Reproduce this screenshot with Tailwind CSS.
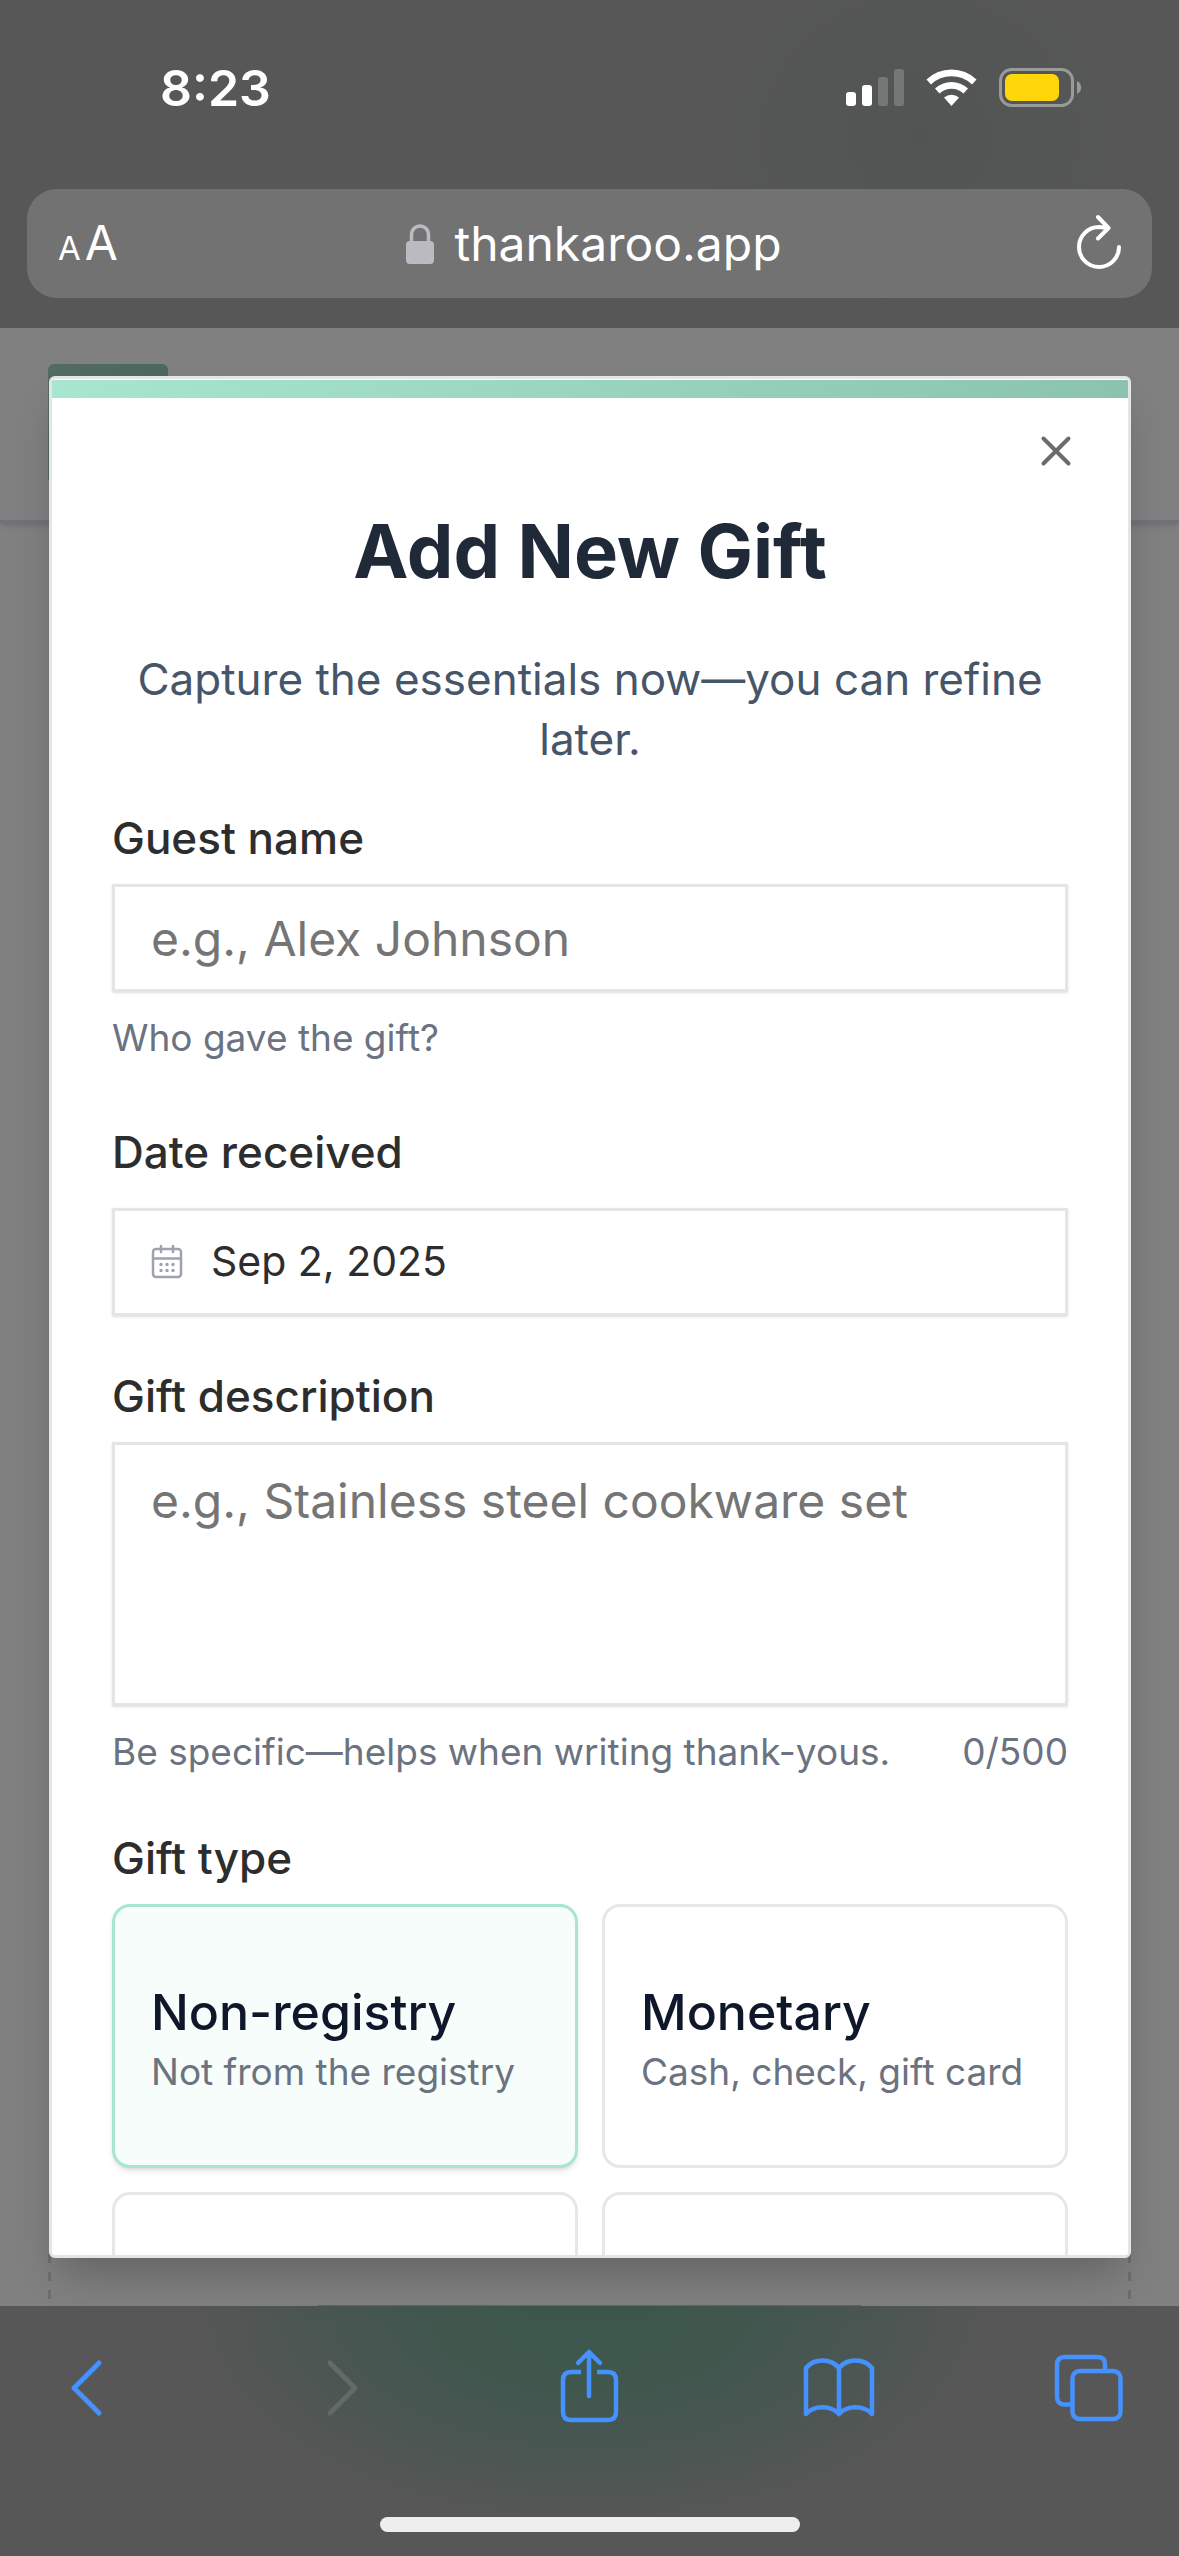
<!DOCTYPE html>
<html lang="en">
<head>
<meta charset="utf-8">
<meta name="viewport" content="width=device-width, initial-scale=1">
<title>Add New Gift</title>
<script src="https://cdn.jsdelivr.net/npm/@tailwindcss/browser@4"></script>
</head>
<body class="flex h-screen flex-col overflow-hidden bg-[#575757] font-['Inter',sans-serif]">

  <!-- Status bar and address bar -->
  <header class="shrink-0 bg-[#575757] bg-[radial-gradient(ellipse_220px_200px_at_78%_42%,#505553_0%,#575757_100%)] pb-[30px] text-white">
    <div class="flex items-center justify-between pt-[58px] pr-[97px] pl-40">
      <time class="text-[50px] leading-[60px] font-semibold">8:23</time>
      <svg class="h-[40px] w-[236px]" viewBox="846 68 236 40" fill="none" aria-label="Signal, Wi-Fi and battery">
        <rect x="846" y="92" width="10" height="14" rx="3" fill="#fff"/>
        <rect x="862" y="85" width="10" height="21" rx="3" fill="#fff"/>
        <rect x="878" y="77" width="10" height="29" rx="3" fill="#757776"/>
        <rect x="894" y="69" width="10" height="37" rx="3" fill="#757776"/>
        <path d="M926.500 79.500 A36 36 0 0 1 976.500 79.500 L972 84.500 A29.500 29.500 0 0 0 931 84.500 Z" fill="#fff"/>
        <path d="M935 88.500 A24 24 0 0 1 968 88.500 L963.500 93.500 A17.500 17.500 0 0 0 939.500 93.500 Z" fill="#fff"/>
        <path d="M944 97.500 A11.500 11.500 0 0 1 959 97.500 L951.500 106 Z" fill="#fff"/>
        <rect x="1000.500" y="69.500" width="72" height="36" rx="11" stroke="#999b9a" stroke-width="3"/>
        <rect x="1005" y="74" width="54" height="27" rx="7" fill="#ffd60a"/>
        <path d="M1077 81 C1082.500 83.500 1082.500 91.500 1077 94 Z" fill="#999b9a"/>
      </svg>
    </div>
    <div class="mx-[27px] mt-[71px] flex h-[109px] items-center justify-between rounded-[30px] bg-[#727272] pr-[30px] pl-[31px]">
      <button type="button" aria-label="Page settings" class="flex w-[70px] items-baseline gap-1 pt-1 leading-[60px]"><span class="text-[33px]">A</span><span class="text-[48px]">A</span></button>
      <a href="#" class="flex items-center gap-5 text-[48px] leading-[60px]">
        <svg class="h-[40px] w-[28px]" viewBox="0 0 28 40" fill="none" aria-hidden="true">
          <rect x="0" y="17" width="28" height="23" rx="4" fill="#bbbac1"/>
          <path d="M5.500 18 V11 C5.500 -1 22.500 -1 22.500 11 V18" stroke="#bbbac1" stroke-width="3.500"/>
        </svg>
        thankaroo.app
      </a>
      <button type="button" aria-label="Reload" class="flex w-[62px] justify-end">
        <svg class="h-[60px] w-[46px]" viewBox="1075 213 46 60" fill="none" stroke="#fff" stroke-width="4" stroke-linecap="round" stroke-linejoin="round">
          <path d="M1118 246 A20 20 0 1 1 1098 226 L1107 227 M1097 216 L1107.500 227 L1097 237.500"/>
        </svg>
      </button>
    </div>
  </header>

  <main class="relative flex min-h-0 flex-1 flex-col bg-[#808080] py-12 pr-12 pl-[49px]">
    <!-- Dimmed page behind the dialog -->
    <div class="absolute inset-x-0 top-0 h-[195px] border-b-[3px] border-[#6f7277] shadow-md" aria-hidden="true">
      <div class="mt-9 ml-12 h-[120px] w-[120px] rounded-md bg-linear-to-r from-[#526c63] to-[#4c685e]"></div>
    </div>
    <div class="absolute inset-x-12 bottom-0 flex h-[52px] justify-between" aria-hidden="true">
      <div class="w-[3px] bg-[repeating-linear-gradient(#6e6e6e_0px_9px,transparent_9px_18px)]"></div>
      <div class="w-[3px] bg-[repeating-linear-gradient(#6e6e6e_0px_9px,transparent_9px_18px)]"></div>
    </div>
    <div class="absolute inset-x-[27%] bottom-0 h-px bg-[#566d64]" aria-hidden="true"></div>

    <section role="dialog" aria-labelledby="dialog-title" class="relative flex min-h-0 flex-1 flex-col overflow-hidden rounded-md border-[3px] border-[#e5e5e5] bg-white pt-px shadow-[0_24px_40px_-10px_rgba(0,0,0,0.24)]">
      <div class="h-[18px] shrink-0 bg-linear-to-r from-[#a8e6cf] to-[#8bc3ae]"></div>
      <button type="button" aria-label="Close" class="absolute top-[50px] right-[50px] p-1">
        <svg class="size-[36px]" viewBox="0 0 36 36" fill="none" stroke="#6b6b6b" stroke-width="4" stroke-linecap="round"><path d="M5.500 5.500 L30.500 30.500 M30.500 5.500 L5.500 30.500"/></svg>
      </button>

      <form class="flex min-h-0 flex-1 flex-col overflow-hidden px-[60px] pt-[113px] text-[#2d2d2d]">
        <h1 id="dialog-title" class="shrink-0 text-center text-[74px] leading-[80px] font-bold text-[#1f2937]">Add New Gift</h1>
        <p class="mt-[58px] shrink-0 text-center text-[44px] leading-[60px] text-[#475569]">Capture the essentials now—you can refine later.</p>

        <div class="mt-[41px] shrink-0">
          <label for="guest" class="block text-[44px] leading-[56px] font-medium">Guest name</label>
          <input id="guest" type="text" placeholder="e.g., Alex Johnson" class="mt-[18px] block h-[108px] w-full border-[3px] border-[#e5e5e5] px-9 text-[48px] shadow-sm placeholder:text-[#757575]">
          <p class="mt-[22px] text-[37px] leading-[48px] text-[#6b7280]">Who gave the gift?</p>
        </div>

        <div class="mt-[62px] shrink-0">
          <label for="date" class="block text-[44px] leading-[56px] font-medium">Date received</label>
          <button id="date" type="button" class="mt-7 flex h-[108px] w-full items-center gap-7 border-[3px] border-[#e5e5e5] px-9 text-left text-[41px] shadow-sm">
            <svg class="h-[36px] w-[32px]" viewBox="0 0 32 36" fill="none" stroke="#9ca3af" stroke-width="2.500" stroke-linecap="round" aria-hidden="true">
              <rect x="2" y="5" width="28" height="28" rx="3"/>
              <path d="M2 14.500 H30 M10 2 V8 M22 2 V8"/>
              <path d="M10 20.500 h.01 M16 20.500 h.01 M22 20.500 h.01 M10 26.500 h.01 M16 26.500 h.01 M22 26.500 h.01" stroke-width="3.500"/>
            </svg>
            Sep 2, 2025
          </button>
        </div>

        <div class="mt-[52px] shrink-0">
          <label for="description" class="block text-[44px] leading-[56px] font-medium">Gift description</label>
          <textarea id="description" placeholder="e.g., Stainless steel cookware set" class="mt-[18px] block h-[264px] w-full resize-none border-[3px] border-[#e5e5e5] px-9 py-5 text-[48px] leading-[72px] shadow-sm placeholder:text-[#757575]"></textarea>
          <div class="mt-[22px] flex justify-between text-[37px] leading-[48px] text-[#6b7280]">
            <p>Be specific—helps when writing thank-yous.</p>
            <p>0/500</p>
          </div>
        </div>

        <fieldset class="mt-[54px] shrink-0">
          <legend class="text-[44px] leading-[56px] font-medium">Gift type</legend>
          <div class="mt-[18px] grid grid-cols-2 gap-6">
            <label class="flex h-[264px] flex-col justify-center rounded-[18px] border-[3px] border-[#a8e6cf] bg-[#f6fdfa] px-9 shadow-md">
              <input type="radio" name="type" checked class="sr-only">
              <span class="text-[50px] leading-[72px] font-medium text-[#0f172a]">Non-registry</span>
              <span class="text-[37px] leading-[48px] text-[#6b7280]">Not from the registry</span>
            </label>
            <label class="flex h-[264px] flex-col justify-center rounded-[18px] border-[3px] border-[#e5e7eb] px-9">
              <input type="radio" name="type" class="sr-only">
              <span class="text-[50px] leading-[72px] font-medium text-[#0f172a]">Monetary</span>
              <span class="text-[37px] leading-[48px] whitespace-nowrap text-[#6b7280]">Cash, check, gift card</span>
            </label>
            <div class="h-[264px] rounded-[18px] border-[3px] border-[#e5e7eb]"></div>
            <div class="h-[264px] rounded-[18px] border-[3px] border-[#e5e7eb]"></div>
          </div>
        </fieldset>
      </form>
    </section>
  </main>

  <!-- Browser toolbar -->
  <footer class="flex h-[250px] shrink-0 flex-col items-center justify-between bg-[#575757] bg-[radial-gradient(ellipse_400px_220px_at_50%_0%,#3d574c_0%,#40574e_40%,#4b5652_70%,#575757_100%)] pt-[34px] pb-6">
    <nav class="flex w-full justify-between pr-[42px] pl-[38px] text-[#4592ff]" aria-label="Browser">
      <button type="button" aria-label="Back"><svg class="size-24" viewBox="0 0 96 96" fill="none" stroke="currentColor" stroke-width="5" stroke-linecap="round" stroke-linejoin="round"><path d="M61 23 L36 48 L61 73"/></svg></button>
      <button type="button" aria-label="Forward" disabled class="text-[#646a68]"><svg class="size-24" viewBox="0 0 96 96" fill="none" stroke="currentColor" stroke-width="5" stroke-linecap="round" stroke-linejoin="round"><path d="M41 23 L66 48 L41 73"/></svg></button>
      <button type="button" aria-label="Share"><svg class="size-24" viewBox="0 0 96 96" fill="none" stroke="currentColor" stroke-width="4.500"><path d="M41 32 H31 Q23 32 23 40 V72 Q23 80 31 80 H68 Q76 80 76 72 V40 Q76 32 68 32 H57"/><path d="M49 56 V12 M38 23 L49 12 L60 23" stroke-linecap="round" stroke-linejoin="round"/></svg></button>
      <button type="button" aria-label="Bookmarks"><svg class="size-24" viewBox="0 0 96 96" fill="none" stroke="currentColor" stroke-width="4.500" stroke-linejoin="round"><path d="M49 28 C41 18 24 18 16 28 V74 C24 65 41 65 49 74 C57 65 74 65 82 74 V28 C74 18 57 18 49 28 V74"/></svg></button>
      <button type="button" aria-label="Tabs"><svg class="size-24" viewBox="0 0 96 96" fill="none" stroke="currentColor" stroke-width="4.500"><path d="M64 31 V24 Q64 17 56 17 H24 Q16 17 16 25 V57 Q16 64.500 24 64.500 H31"/><rect x="31.500" y="31" width="48" height="48" rx="7"/></svg></button>
    </nav>
    <div class="h-[15px] w-[420px] rounded-full bg-[#eee]"></div>
  </footer>
</body>
</html>
